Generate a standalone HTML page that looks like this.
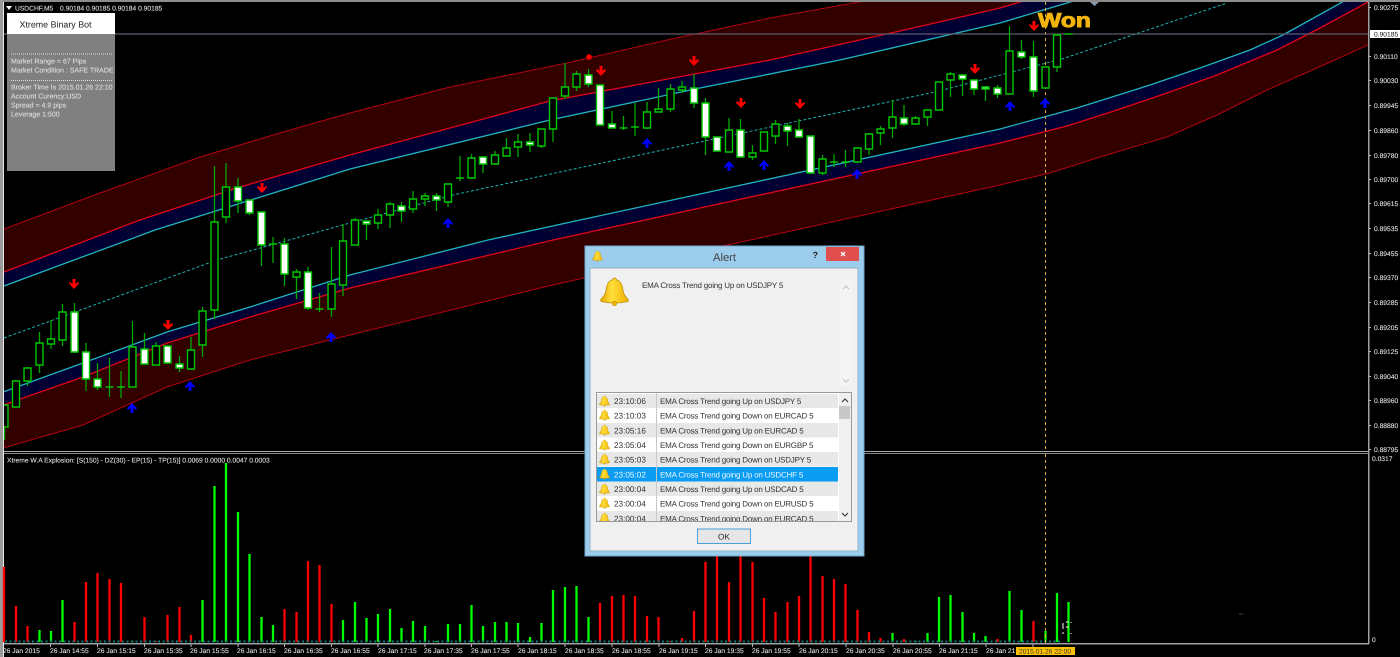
<!DOCTYPE html>
<html><head><meta charset="utf-8"><title>Xtreme Binary Bot</title>
<style>
html,body{margin:0;padding:0;background:#000;width:1400px;height:657px;overflow:hidden}
svg{display:block;position:absolute;left:0;top:0}
text{font-family:"Liberation Sans",sans-serif;text-rendering:geometricPrecision}
.a text{font-size:6.7px;fill:#dcdcdc;stroke:#dcdcdc;stroke-width:.12px}
.p text{font-size:7px;fill:#dedede;stroke:#dedede;stroke-width:.1px}
.t{font-size:8.2px;fill:#333}
.m{font-size:8px;letter-spacing:-.2px;fill:#333}
</style></head><body>
<svg width="1400" height="657" viewBox="0 0 1400 657" xmlns="http://www.w3.org/2000/svg">
<defs>
<clipPath id="c"><rect x="4" y="2" width="1364" height="449"/></clipPath>
<clipPath id="l"><rect x="597" y="393" width="254" height="128"/></clipPath>
<linearGradient id="g" x1="0" y1="0" x2="1" y2="0"><stop offset="0" stop-color="#e8a800"/><stop offset=".4" stop-color="#ffdf3c"/><stop offset="1" stop-color="#eeb000"/></linearGradient>
<symbol id="b" viewBox="0 0 28 28"><path d="M14 1c-1 0-2 .8-2 1.800C8 4 6.500 7 6 12 5.500 17 3 19.500 1 21.500 0 23 1 24 3 24c7 1.500 15 1.500 22 0 2 0 3-1 2-2.500C25 19.500 22.500 17 22 12 21.500 7 20 4 16 2.800 16 1.800 15 1 14 1Z" fill="url(#g)" stroke="#c08e00" stroke-width=".8"/><circle cx="14" cy="25.500" r="2.200" fill="#f0b400" stroke="#c08e00" stroke-width=".6"/></symbol>
<path id="d" d="M-1.500 0h3v5l2.300-2 1.300 1.500L0 10-5.100 4.500l1.300-1.500 2.300 2z" fill="#ff0000"/>
<path id="u" d="M-1.500 10h3v-5l2.300 2 1.300-1.500L0 0-5.100 5.500l1.300 1.500 2.300-2z" fill="#0000ff"/>
</defs>
<rect width="1400" height="657" fill="#000"/>
<g clip-path="url(#c)">
<path d="M4 229 100 193 200 157 283 132 350 113 450 87 567 63 667 40 700 33 770 18 870 0 1027 0 1000 8 900 31 770 60 700 73 550 101 350 155 240 187 140 220 4 272Z" fill="#330000"/>
<path d="M4 272 140 220 240 187 350 155 550 101 700 73 770 60 900 31 1000 8 1027 0 1077 0 1000 23 840 60 700 88 550 120 350 169 155 230 4 286Z" fill="#000033"/>
<path d="M3 392 83 363 167 332 250 307 350 275 488 240 700 194 1000 129 1077 108 1150 85 1200 68 1250 50 1283 35 1343 2 1346 0 1368 0 1368 2 1320 28 1277 50 1217 75 1167 93 1117 110 1067 126 1000 143 700 208 553 240 350 288 250 317 167 343 83 377 3 405Z" fill="#000033"/>
<path d="M3 405 83 377 167 343 250 317 350 288 553 240 700 208 1000 143 1067 126 1117 110 1167 93 1217 75 1277 50 1320 28 1368 2 1368 45 1317 68 1267 90 1217 115 1167 137 1100 157 1050 173 1000 185 723 246 540 288 350 335 250 360 167 387 83 425 3 448Z" fill="#330000"/>
<g fill="none" stroke-width="1">
<path d="M4 229 100 193 200 157 283 132 350 113 450 87 567 63 667 40 700 33 770 18 870 0" stroke="#b00010"/>
<path d="M3 448 83 425 167 387 250 360 350 335 540 288 723 246 1000 185 1050 173 1100 157 1167 137 1217 115 1267 90 1317 68 1368 45" stroke="#b00010"/>
<path d="M4 272 140 220 240 187 350 155 550 101 700 73 770 60 900 31 1000 8 1027 0" stroke="#e00018" stroke-width="1.300"/>
<path d="M3 405 83 377 167 343 250 317 350 288 553 240 700 208 1000 143 1067 126 1117 110 1167 93 1217 75 1277 50 1320 28 1368 2" stroke="#e00018" stroke-width="1.300"/>
<path d="M4 286 155 230 350 169 550 120 700 88 840 60 1000 23 1077 0" stroke="#1fb4c0" stroke-width="1.300"/>
<path d="M3 392 83 363 167 332 250 307 350 275 488 240 700 194 1000 129 1077 108 1150 85 1200 68 1250 50 1283 35 1346 0" stroke="#1fb4c0" stroke-width="1.300"/>
<path d="M4 338 217 260 350 223 453 195 700 142 935 92 1000 75 1062 59 1227 3" stroke="#1fb0b0" stroke-dasharray="3 2"/>
</g>
<path d="M1045.500 2V452" stroke="#e0b040" stroke-dasharray="3 3" fill="none"/>
<path d="M4 34H1368" stroke="#5c5c6c" stroke-width="1.200" fill="none"/>
<path fill="none" stroke="#00a800" stroke-width="1.300" d="M4.500 405V440M16 380V407M27.500 367V386M39.500 332V373M51 320V349M62.500 304V346M74.500 303V353M86 343V391M97.500 363V390M109.500 358V397M121 371V398M132.500 321V387M144.500 333V364M156 342V365M167.500 346V363M179.500 356V372M191 337V370M202.500 307V357M214.500 166V319M226 163V223M238 178V213M249.500 200V215M261.500 212V266M273 237V263M284.500 238V286M296.500 269V299M308 267V310M319.500 293V312M331.500 247V317M343 224V296M355 218V240M366.500 221V240M378 209V229M390 202V228M401.500 202V222M413 191V213M425 193V206M436.500 193V211M448 184V207M460 156V181M471.500 154V179M483 157V173M495 151V165M506.500 138V156M518 134V157M530 133V152M541.500 129V148M553 98V142M565 63V99M576.500 71V91M588.500 69V87M600 85V125M612 111V128M623.500 116V130M635 103V136M647 102V129M658.500 88V112M670.500 84V112M682 81V93M694 74V108M705.500 98V155M717 137V151M729 118V152M740.500 119V157M752.500 145V160M764 132V151M775.500 120V144M787.500 123V146M799 119V137M810.500 136V174M822.500 155V175M834 154V167M845.500 150V167M857.500 147V163M869 133V155M880.500 126V145M892.500 100V138M904 105V126M915.500 116V124M927.500 110V126M939 82V110M950.500 72V97M962.500 74V96M974 80V95M985.500 86V101M997.500 85V98M1009.500 26V94M1021.500 40V59M1033.500 41V97M1045.500 67V88M1057 35V72"/>
<path fill="#000" stroke="#00c800" stroke-width="1.400" d="M1 405h7v22h-7zM12.500 381h7v26h-7zM24 368h7v13h-7zM36 343h7v22h-7zM47.500 339h7v5h-7zM59 312h7v28h-7zM129 347h7v40h-7zM152.500 346h7v19h-7zM187.500 350h7v19h-7zM199 311h7v34h-7zM211 222h7v88h-7zM222.500 187h7v30h-7zM293 272h7v5h-7zM328 284h7v25h-7zM339.500 241h7v44h-7zM351.500 220h7v25h-7zM374.500 215h7v8h-7zM386.500 204h7v11h-7zM409.500 199h7v10h-7zM421.500 196h7v3h-7zM444.500 184h7v18h-7zM468 158h7v20h-7zM491.500 155h7v9h-7zM503 148h7v8h-7zM514.500 142h7v5h-7zM538 129h7v17h-7zM549.500 98h7v31h-7zM561.500 87h7v9h-7zM573 74h7v13h-7zM643.500 112h7v16h-7zM655 109h7v3h-7zM667 89h7v20h-7zM678.500 87h7v3h-7zM725.500 130h7v22h-7zM749 153h7v4h-7zM760.500 132h7v19h-7zM772 124h7v12h-7zM819 159h7v14h-7zM854 148h7v14h-7zM865.500 134h7v15h-7zM877 129h7v4h-7zM889 117h7v11h-7zM912 118h7v6h-7zM924 110h7v7h-7zM935.500 82h7v28h-7zM947 74h7v6h-7zM1006 51h7v43h-7zM1042 67h7v21h-7zM1053.500 35h7v32h-7z"/>
<path fill="#fff" stroke="#00c800" stroke-width="1.400" d="M71 312h7v40h-7zM82.500 352h7v27h-7zM94 379h7v8h-7zM141 349h7v15h-7zM164 346h7v17h-7zM176 364h7v4h-7zM234.500 187h7v14h-7zM246 200h7v13h-7zM258 212h7v33h-7zM281 244h7v30h-7zM304.500 272h7v36h-7zM363 221h7v3h-7zM398 206h7v5h-7zM433 196h7v4h-7zM479.500 157h7v7h-7zM526.500 142h7v3h-7zM585 75h7v9h-7zM596.500 85h7v40h-7zM608.500 124h7v4h-7zM690.500 88h7v15h-7zM702 103h7v34h-7zM713.500 137h7v14h-7zM737 130h7v27h-7zM784 126h7v5h-7zM795.500 130h7v7h-7zM807 136h7v37h-7zM900.500 118h7v6h-7zM959 75h7v4h-7zM970.500 80h7v9h-7zM982 87h7v2h-7zM994 88h7v6h-7zM1018 52h7v5h-7zM1030 57h7v34h-7z"/>
<path fill="none" stroke="#00e000" stroke-width="1.300" d="M105.500 387h8M117 387h8M269 244h8M315.500 309h8M456 178h8M619.500 128h8M631 127h8M830 162h8M841.500 162h8M1064.500 34h8"/>
<use href="#d" x="74" y="279"/><use href="#d" x="168" y="320"/><use href="#d" x="262" y="183"/><use href="#d" x="601" y="66"/><use href="#d" x="694" y="56"/><use href="#d" x="741" y="98"/><use href="#d" x="800" y="99"/><use href="#d" x="975" y="64"/><use href="#d" x="1034" y="21"/>
<circle cx="589" cy="57" r="2.800" fill="#ff0000"/>
<use href="#u" x="132" y="403"/><use href="#u" x="190" y="381"/><use href="#u" x="331" y="332"/><use href="#u" x="448" y="218"/><use href="#u" x="647" y="138"/><use href="#u" x="729" y="161"/><use href="#u" x="764" y="160"/><use href="#u" x="857" y="169"/><use href="#u" x="1010" y="101"/><use href="#u" x="1045" y="98"/>
<path d="M1090 2h9l-4.500 4z" fill="#8a9ab0"/>
<text x="1038" y="27" textLength="53" lengthAdjust="spacingAndGlyphs" style="font-size:20px;font-weight:bold;fill:#f3b40c;stroke:#f3b40c;stroke-width:.9px">Won</text>
</g>
<rect x="0" y="0" width="1400" height="2" fill="#8c8c8c"/>
<rect x="0" y="0" width="3" height="657" fill="#9a9a9a"/>
<rect x="3" y="2" width="1" height="655" fill="#e8e8e8"/>
<rect x="4" y="451" width="1365" height="1" fill="#aaa"/>
<rect x="4" y="453" width="1365" height="1" fill="#888"/>
<rect x="1368" y="2" width="1.500" height="642" fill="#a0a0a0"/>
<rect x="4" y="643" width="1365" height="1.500" fill="#a0a0a0"/>
<g fill="none" stroke-width="2.300">
<path stroke="#ff0000" d="M4 642V567M16 642V606M27.500 642V626M74.500 642V622M86 642V582M97.500 642V573M109.500 642V579M121 642V583M144.500 642V617M156 642V641M167.500 642V615M179.500 642V607M191 642V635M284.500 642V609M296.500 642V612M308 642V561M319.500 642V565M331.500 642V604M600 642V603M612 642V596M623.500 642V595M635 642V596M647 642V616M658.500 642V617M670.500 642V641M682 642V638M694 642V611M705.500 642V562M717 642V556M729 642V582M740.500 642V556M752.500 642V562M764 642V598M775.500 642V612M787.500 642V602M799 642V596M810.500 642V556M822.500 642V576M834 642V579M845.500 642V584M857.500 642V610M869 642V632M880.500 642V638M904 642V639M997.500 642V639M1033.500 642V621"/>
<path stroke="#00ff00" d="M39.500 642V630M51 642V631M62.500 642V600M132.500 642V641M202.500 642V600M214.500 642V486M226 642V463M238 642V512M249.500 642V554M261.500 642V617M273 642V625M343 642V620M355 642V602M366.500 642V618M378 642V614M390 642V609M401.500 642V628M413 642V621M425 642V626M436.500 642V641M448 642V624M460 642V624M471.500 642V605M483 642V626M495 642V622M506.500 642V622M518 642V623M530 642V637M541.500 642V623M553 642V590M565 642V587M576.500 642V586M588.500 642V617M892.500 642V633M915.500 642V641M927.500 642V633M939 642V597M950.500 642V595M962.500 642V612M974 642V633M985.500 642V636M1009.500 642V591M1021.500 642V610M1045.500 642V631M1057 642V593M1068.500 642V602"/>
</g>
<path d="M5 641.500H1062" stroke="#0a7a7a" stroke-width="2" stroke-dasharray="2 2.500" fill="none"/>
<path d="M1045.500 454V643" stroke="#e0b040" stroke-dasharray="3 3" fill="none"/>
<path d="M1063 623v6M1066 622h3M1066 627h3M1071 622v1M1071 633v1M1063 632v2" stroke="#fff" fill="none"/>
<path d="M1239 614h4" stroke="#444" fill="none"/>
<path d="M50.500 644.500v2.500M97.500 644.500v2.500M144.500 644.500v2.500M191 644.500v2.500M238 644.500v2.500M284.500 644.500v2.500M331.500 644.500v2.500M378 644.500v2.500M425 644.500v2.500M471.500 644.500v2.500M518 644.500v2.500M565 644.500v2.500M612 644.500v2.500M659 644.500v2.500M705.500 644.500v2.500M752.500 644.500v2.500M799 644.500v2.500M846 644.500v2.500M893 644.500v2.500M939.500 644.500v2.500M986 644.500v2.500M1033 644.500v2.500" stroke="#bbb" fill="none"/>
<path d="M1369 7.500h2M1369 56.500h2M1369 80.500h2M1369 105.500h2M1369 130.500h2M1369 155.500h2M1369 179.500h2M1369 203.500h2M1369 228.500h2M1369 253.500h2M1369 277.500h2M1369 302.500h2M1369 327.500h2M1369 351.500h2M1369 376.500h2M1369 400.500h2M1369 425.500h2M1369 449.500h2" stroke="#bbb" fill="none"/>
<g class="a">
<path d="M6 6h6l-3 4z" fill="#fff"/>
<text x="15" y="10.500">USDCHF,M5</text><text x="60" y="10.500">0.90184 0.90185 0.90184 0.90185</text>
<text x="7" y="462.500">Xtreme W.A Explosion: [S(150) - DZ(30) - EP(15) - TP(15)] 0.0069 0.0000 0.0047 0.0003</text>
<text x="1374" y="10">0.90275</text>
<text x="1374" y="59">0.90110</text><text x="1374" y="83">0.90030</text><text x="1374" y="108">0.89945</text><text x="1374" y="133">0.89860</text><text x="1374" y="158">0.89780</text><text x="1374" y="182">0.89700</text><text x="1374" y="206">0.89615</text><text x="1374" y="231">0.89535</text><text x="1374" y="256">0.89455</text><text x="1374" y="280">0.89370</text><text x="1374" y="305">0.89285</text><text x="1374" y="330">0.89205</text><text x="1374" y="354">0.89125</text><text x="1374" y="379">0.89040</text><text x="1374" y="403">0.88960</text><text x="1374" y="428">0.88880</text><text x="1374" y="452">0.88795</text>
<text x="1372" y="461">0.0317</text><text x="1372" y="642">0</text>
<text x="3" y="653">26 Jan 2015</text><text x="50" y="653">26 Jan 14:55</text><text x="97" y="653">26 Jan 15:15</text><text x="144" y="653">26 Jan 15:35</text><text x="190" y="653">26 Jan 15:55</text><text x="237" y="653">26 Jan 16:15</text><text x="284" y="653">26 Jan 16:35</text><text x="331" y="653">26 Jan 16:55</text><text x="378" y="653">26 Jan 17:15</text><text x="424" y="653">26 Jan 17:35</text><text x="471" y="653">26 Jan 17:55</text><text x="518" y="653">26 Jan 18:15</text><text x="565" y="653">26 Jan 18:35</text><text x="612" y="653">26 Jan 18:55</text><text x="659" y="653">26 Jan 19:15</text><text x="705" y="653">26 Jan 19:35</text><text x="752" y="653">26 Jan 19:55</text><text x="799" y="653">26 Jan 20:15</text><text x="846" y="653">26 Jan 20:35</text><text x="893" y="653">26 Jan 20:55</text><text x="939" y="653">26 Jan 21:15</text><text x="986" y="653">26 Jan 21</text>
</g>
<rect x="1016" y="647" width="59" height="8" fill="#ffc000"/>
<text x="1019" y="653.500" style="font-size:6.700px;fill:#333">2015.01.26 22:00</text>
<rect x="1370" y="30" width="30" height="8" fill="#fff"/>
<text x="1374" y="36.500" style="font-size:6.700px;fill:#111">0.90185</text>
<!-- info panel -->
<rect x="7" y="13" width="108" height="158" fill="#808080"/>
<rect x="7" y="13" width="108" height="21" fill="#fff"/>
<text x="19.500" y="27.500" style="font-size:8.900px;fill:#222">Xtreme Binary Bot</text>
<path d="M11 54h101M11 80.500h101" stroke="#ddd" stroke-dasharray="1 1" fill="none"/>
<g class="p"><text x="11" y="63.500">Market Range = 67 Pips</text><text x="11" y="72.500">Market Condition : SAFE TRADE</text><text x="11" y="89.500">Broker Time Is 2015.01.26 22:10</text><text x="11" y="98.500">Account Curency:USD</text><text x="11" y="107.500">Spread = 4.9 pips</text><text x="11" y="116.500">Leverage 1:500</text></g>
<!-- dialog -->
<rect x="585" y="246" width="279" height="310" fill="#9ccdec" stroke="#6fa8cc"/>
<rect x="590" y="268" width="268" height="283" fill="#f0f0f0" stroke="#8fb4cc"/>
<rect x="826" y="247" width="33" height="14" fill="#e04e4e"/>
<path d="M841 252l4 4M845 252l-4 4" stroke="#fff" stroke-width="1.300" fill="none"/>
<text x="812.500" y="258" style="font-size:9px;font-weight:bold;fill:#222">?</text>
<text x="713" y="261" style="font-size:11.200px;fill:#444">Alert</text>
<use href="#b" x="592" y="250" width="11" height="12"/>
<use href="#b" x="600" y="277" width="29" height="29"/>
<text x="642" y="288" class="m">EMA Cross Trend going Up on USDJPY 5</text>
<rect x="840" y="280" width="12" height="106" fill="#f4f4f4"/>
<path d="M843 289l3-3 3 3M843 379l3 3 3-3" stroke="#c4c4c4" stroke-width="1.200" fill="none"/>
<rect x="596.500" y="392.500" width="255" height="129" fill="#fff" stroke="#9a9a9a"/>
<g clip-path="url(#l)">
<rect x="597" y="394" width="241" height="14" fill="#e8e8e8"/><rect x="597" y="423" width="241" height="14.500" fill="#e8e8e8"/><rect x="597" y="452" width="241" height="14.500" fill="#e8e8e8"/><rect x="597" y="481.500" width="241" height="14.500" fill="#e8e8e8"/><rect x="597" y="511" width="241" height="12" fill="#e8e8e8"/>
<rect x="597" y="467" width="241" height="14.500" fill="#0a9cf2"/>
<path d="M656.500 393V522" stroke="#c8c8c8" fill="none"/>
<use href="#b" x="599" y="395" width="11" height="12"/><use href="#b" x="599" y="409" width="11" height="12"/><use href="#b" x="599" y="424" width="11" height="12"/><use href="#b" x="599" y="439" width="11" height="12"/><use href="#b" x="599" y="453" width="11" height="12"/><use href="#b" x="599" y="468" width="11" height="12"/><use href="#b" x="599" y="483" width="11" height="12"/><use href="#b" x="599" y="497" width="11" height="12"/><use href="#b" x="599" y="512" width="11" height="12"/>
<text x="614" y="404" class="t">23:10:06</text><text x="660" y="404" class="m">EMA Cross Trend going Up on USDJPY 5</text>
<text x="614" y="418.700" class="t">23:10:03</text><text x="660" y="418.700" class="m">EMA Cross Trend going Down on EURCAD 5</text>
<text x="614" y="433.300" class="t">23:05:16</text><text x="660" y="433.300" class="m">EMA Cross Trend going Up on EURCAD 5</text>
<text x="614" y="448" class="t">23:05:04</text><text x="660" y="448" class="m">EMA Cross Trend going Down on EURGBP 5</text>
<text x="614" y="462.700" class="t">23:05:03</text><text x="660" y="462.700" class="m">EMA Cross Trend going Down on USDJPY 5</text>
<text x="614" y="477.300" class="t" style="fill:#e8f6ff">23:05:02</text><text x="660" y="477.300" class="m" style="fill:#e8f6ff">EMA Cross Trend going Up on USDCHF 5</text>
<text x="614" y="492" class="t">23:00:04</text><text x="660" y="492" class="m">EMA Cross Trend going Up on USDCAD 5</text>
<text x="614" y="506.700" class="t">23:00:04</text><text x="660" y="506.700" class="m">EMA Cross Trend going Down on EURUSD 5</text>
<text x="614" y="521.300" class="t">23:00:04</text><text x="660" y="521.300" class="m">EMA Cross Trend going Down on EURCAD 5</text>
<rect x="839" y="393" width="12" height="128" fill="#f0f0f0"/>
<rect x="839" y="406" width="11" height="13" fill="#c8c8c8"/>
<path d="M842 402l3-3 3 3M842 513l3 3 3-3" stroke="#333" stroke-width="1.100" fill="none"/>
</g>
<rect x="697.500" y="529" width="53" height="14.500" fill="#e6e6e6" stroke="#4a9fd8"/>
<text x="718" y="539.500" style="font-size:8.200px;fill:#222">OK</text>
</svg>
</body></html>
